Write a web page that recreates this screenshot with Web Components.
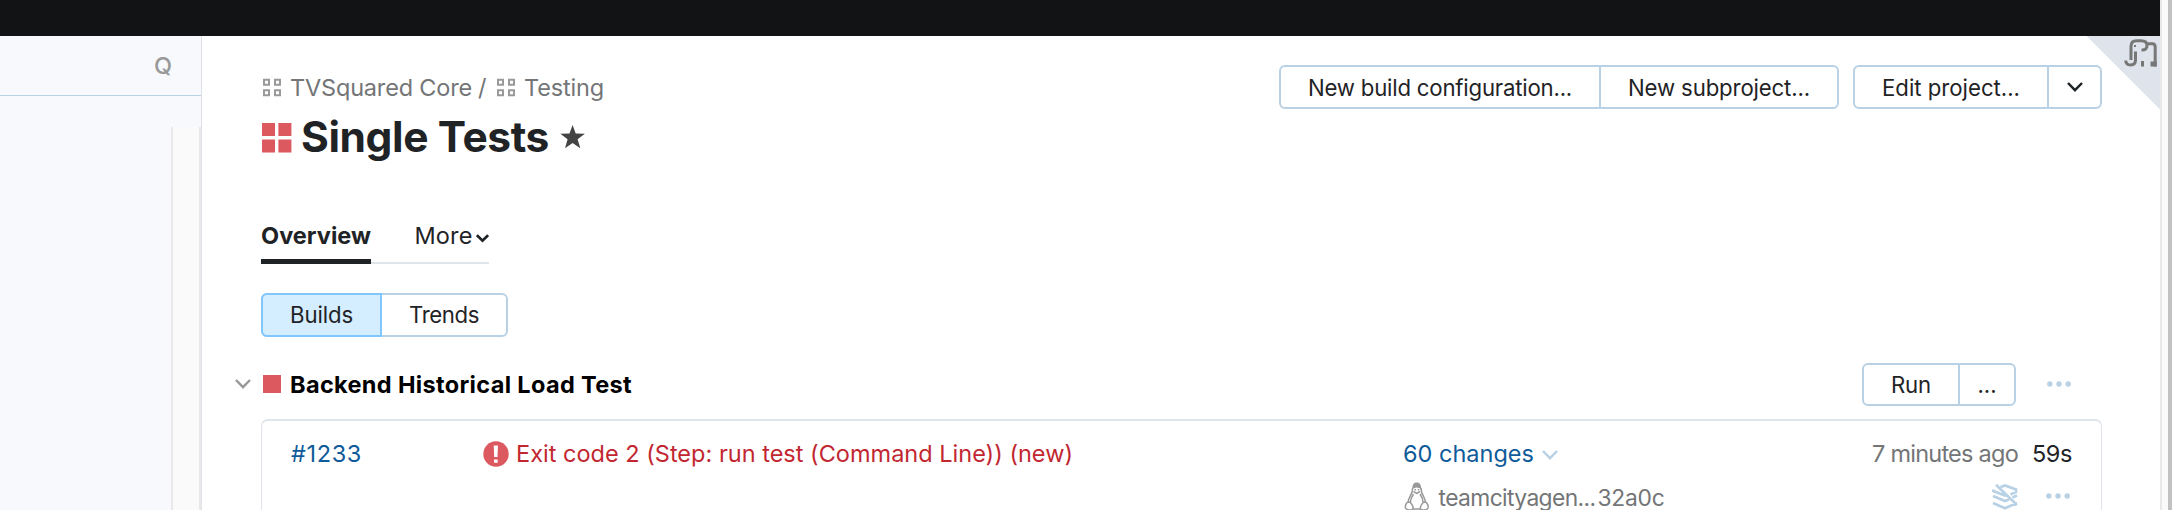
<!DOCTYPE html>
<html lang="en">
<head>
<meta charset="utf-8">
<title>Single Tests</title>
<style>
html,body{margin:0;height:510px;overflow:hidden;background:#fff}
body{font-family:Inter,"Liberation Sans",sans-serif;font-weight:400;color:#1f2326}
</style>
</head>
<body>
<tc-app></tc-app>
<script>
const define = (name, html, setup) => customElements.define(name, class extends HTMLElement {
  connectedCallback() {
    if (this.shadowRoot) return;
    const t = document.createElement('template');
    t.innerHTML = html;
    this.attachShadow({mode: 'open'}).append(t.content.cloneNode(true));
    if (setup) setup(this);
  }
});

// Single-line label; `w` is its total advance, reached through letter-spacing.
define('tc-label', `<style>:host{display:block;white-space:nowrap;line-height:30px;flex:none}span{display:inline-block}</style><span><slot></slot></span>`, el => {
  const w = +el.getAttribute('w'), s = el.shadowRoot.querySelector('span');
  if (!w) return;
  const n = el.textContent.length, natural = s.getBoundingClientRect().width;
  s.style.letterSpacing = ((w - natural) / n).toFixed(3) + 'px';
  el.style.width = w + 'px';
});

const svg = (w, h, body) => `<svg width="${w}" height="${h}" viewBox="0 0 ${w} ${h}" fill="none">${body}</svg>`;
const ICONS = {
  grid: svg(20, 19, '<g stroke="#999" stroke-width="2"><path d="M2 1.7h5v5H2zM13 1.7h5v5h-5zM2 12.2h5v5H2zM13 12.2h5v5h-5z"/></g>'),
  project: svg(30, 30, '<path fill="#dc5960" d="M0 0h13v13H0zM16.4 0h13v13h-13zM0 16.4h13v13H0zM16.4 16.4h13v13h-13z"/>'),
  star: svg(26, 24, '<path fill="#444" d="M12.6 0l3.1 8.5 9.2.3-7.3 5.5 2.7 9-7.700-5.300L5 23.300l2.600-9L.3 8.800l9.200-.3z"/>'),
  square: svg(18, 18, '<path fill="#dc5960" d="M0 0h18v18H0z"/>'),
  chevron: svg(16, 10, '<path stroke="currentColor" stroke-width="2.500" d="M1 1l7 7.200L15 1"/>'),
  small: svg(13, 9, '<path stroke="currentColor" stroke-width="2.700" d="M.9 1.200L6.500 6.700l5.600-5.500"/>'),
  dots: svg(24, 6, '<g fill="#b8d1e5"><circle cx="2.800" cy="3" r="2.700"/><circle cx="12" cy="3" r="2.700"/><circle cx="21.200" cy="3" r="2.700"/></g>'),
  alert: svg(26, 26, '<circle cx="13" cy="13" r="12.700" fill="#dc5960"/><path fill="#fff" d="M10.700 4.500h4.300l-.5 11.500h-3.300zM11 18.500h3.700v3.300H11z"/>'),
  tux: svg(26, 29, '<path fill="#999" d="M8.300 8C8 3 9.500.5 12.700.5s4.800 2.500 4.500 7.500l-1.500-1.700-3-.8-3 .8z"/><g stroke="#999" stroke-width="1.500"><path d="M8.500 6c.5 4-1 6-2.800 9-1.500 3-1.500 4-1.700 6M17.100 6c-.3 4 1 6 2.700 9 1.500 3 1.500 4 1.700 6M9.500 9.500l3.200 1.800 3.300-1.800M9.500 12c-2 3-3 6-3 8M16 12c2 3 3 6 3 8M4 20c2-.5 4 2 5 5 .5 2-.5 3-2 3-2 0-5-1-5.500-2-.5-2 .5-5 2.500-6zM21.500 20c-2-.5-4 2-5 5-.5 2 .5 3 2 3 2 0 5-1 5.500-2 .5-2-.5-5-2.500-6zM9 27h7.500"/></g><path fill="#999" d="M10.500 7h1.500v1.500h-1.500zM13.700 7h1.500v1.500h-1.500z"/>'),
  layers: svg(26, 26, '<g stroke="#b8d1e5" stroke-width="2.700"><path d="M8.500 3L13 1.500l11 4V8l-5.500 2.500M1.300 5.500V7l11.700 4.500 2-.8M1 12l12 5 4-1.600M20.500 13.500l4.500-2M1 19l12 5.200L25 19M4 .8L25 21"/></g>'),
  elephant: svg(33, 28, '<g stroke="#777" stroke-width="3"><path d="M7 21V7.500Q7 1.700 12.500 1.700H17Q23 1.700 23 6.500T17.500 11M22.500 4.800H28.500Q31.200 4.800 31.200 8V27.500M1.700 21.500Q2 26 6.500 26Q11.500 26 11.500 21V12.500"/></g><path fill="#777" d="M17 22h3v5.500h-3zM26.500 22.500h6.200v5h-6.200zM10 6h2v2h-2z"/>')
};
define('tc-icon', `<style>:host{display:block;flex:none}svg{display:block}</style><div></div>`, el => {
  el.shadowRoot.querySelector('div').innerHTML = ICONS[el.getAttribute('name')];
});

define('tc-group', `<style>:host{display:flex;box-sizing:border-box;border:2px solid #b8d1e5;border-radius:6px;height:44px;flex:none;font-size:22.200px}</style><slot></slot>`);
define('tc-button', `<style>
:host{display:flex;box-sizing:border-box;align-items:center;justify-content:center;border-right:2px solid #b8d1e5;height:40px;flex:none}
:host([last]){border-right:0}
:host([active]){background:#d4edff;border:2px solid #80c6ff;margin:-2px 0 -2px -2px;height:44px;border-radius:6px 0 0 6px}
::slotted(tc-label){padding-top:var(--label-drop,0px)}
</style><slot></slot>`, el => { el.style.width = el.getAttribute('size') + 'px'; });

define('tc-sidebar', `<style>
:host{display:flex;flex-direction:column;box-sizing:border-box;width:202px;background:#f7f9fc;border-right:1px solid #dfe3e9;color:#999;flex:none}
.search{display:flex;justify-content:flex-end;height:59px;border-bottom:1px solid #b8d1e5;padding-right:29px;font-size:23.500px}
tc-label{margin-top:14.500px;font-weight:500}
.track{box-sizing:border-box;width:30px;flex:1;margin:31px 0 0 171px;background:#fafafa;border:solid #e8e8e8;border-width:0 2px}
</style><div class="search"><tc-label>Q</tc-label></div><div class="track"></div>`);

define('tc-header', `<style>
:host{display:flex;justify-content:space-between;height:175px}
.crumbs{display:flex;padding-top:37px;padding-left:1px;font-size:23.500px;color:#737577}
.crumbs tc-icon{margin-top:4.500px}
.title{display:flex;margin-top:3px;padding-left:1px;font-size:42.500px;font-weight:700}
.title tc-label{line-height:62px}
.actions{display:flex;gap:14px;padding-top:29px;--label-drop:2px}
</style>
<div>
 <div class="crumbs"><tc-icon name="grid"></tc-icon><tc-label w="182" style="margin-left:8px">TVSquared Core</tc-label><tc-label style="margin-left:6px;width:18px">/</tc-label><tc-icon name="grid"></tc-icon><tc-label w="80" style="margin-left:8px">Testing</tc-label></div>
 <div class="title"><tc-icon name="project" style="margin-top:17px"></tc-icon><tc-label w="248" style="margin-left:9px">Single Tests</tc-label><tc-icon name="star" style="margin:19px 0 0 11px"></tc-icon></div>
</div>
<div class="actions">
 <tc-group><tc-button size="320"><tc-label w="264">New build configuration...</tc-label></tc-button><tc-button last size="236"><tc-label w="182">New subproject...</tc-label></tc-button></tc-group>
 <tc-group><tc-button size="194"><tc-label w="138">Edit project...</tc-label></tc-button><tc-button last size="51"><tc-icon name="chevron"></tc-icon></tc-button></tc-group>
</div>`);

define('tc-tabs', `<style>
:host{display:flex;font-size:23.500px;height:53px}
div{box-sizing:border-box;height:53px;padding-top:10px}
.on{width:110px;border-bottom:5px solid #1f2326;font-weight:700}
.more{display:flex;width:118px;border-bottom:2px solid #dfe5eb;padding-left:43.500px}
tc-icon{margin:13px 0 0 3px}
</style><div class="on"><tc-label w="110">Overview</tc-label></div><div class="more"><tc-label w="58">More</tc-label><tc-icon name="small"></tc-icon></div>`);

define('tc-build-head', `<style>
:host{display:flex;height:56px;margin-top:26px;margin-left:-26px;font-size:23.500px;font-weight:700;color:#000}
.end{display:flex;margin-left:auto;margin-right:31px;font-weight:400;color:#1f2326}
</style>
<tc-icon name="chevron" style="color:#999;margin-top:16px"></tc-icon><tc-icon name="square" style="margin:12px 0 0 12px"></tc-icon><tc-label w="342" style="margin:7px 0 0 9px">Backend Historical Load Test</tc-label>
<div class="end"><tc-group style="height:43px"><tc-button size="96" style="height:39px"><tc-label w="40">Run</tc-label></tc-button><tc-button last size="54" style="height:39px"><tc-label w="19">...</tc-label></tc-button></tc-group><tc-icon name="dots" style="margin:17.500px 0 0 31px"></tc-icon></div>`);

define('tc-build-row', `<style>
:host{display:grid;grid-template-columns:193px 920px 1fr auto;box-sizing:border-box;height:120px;border:1px solid #dfe3ec;border-top-width:2px;border-radius:7px 7px 0 0;padding:18px 30px 0 29px;font-size:23.500px;color:#737577}
.l{display:flex}
.agent{display:flex;margin-top:14px}
.end{display:flex;flex-direction:column;align-items:flex-end}
</style>
<tc-label w="71" style="color:#0f5b99">#1233</tc-label>
<div class="l" style="color:#c22731"><tc-icon name="alert" style="margin:2px 0 0 -1px"></tc-icon><tc-label w="557" style="margin-left:7px">Exit code 2 (Step: run test (Command Line)) (new)</tc-label></div>
<div><div class="l" style="color:#0f5b99;margin-left:-1px"><tc-label w="131">60 changes</tc-label><tc-icon name="chevron" style="color:#b8d1e5;margin:11px 0 0 8px"></tc-icon></div>
<div class="agent"><tc-icon name="tux" style="margin-top:-1.500px"></tc-icon><tc-label w="157" style="margin-left:8.500px;font-size:22.800px">teamcityagen...</tc-label><tc-label w="67" style="margin-left:2px;font-size:22.800px">32a0c</tc-label></div></div>
<div class="end"><div class="l"><tc-label w="146">7 minutes ago</tc-label><tc-label w="40" style="margin:0 -1px 0 14px;color:#1f2326">59s</tc-label></div>
<div class="l" style="margin-top:15px"><tc-icon name="layers"></tc-icon><tc-icon name="dots" style="margin:9px 1px 0 28px"></tc-icon></div></div>`);

define('tc-app', `<style>
:host{display:flex;height:510px;width:2172px;overflow:hidden}
.page{width:2160px;display:flex;flex-direction:column;flex:none}
.bar{height:36px;background:#121315;flex:none}
.body{display:flex;flex:1;min-height:0}
main{position:relative;flex:1;padding:0 58px 0 59px;min-width:0;height:474px}
.corner{position:absolute;right:0;top:0;width:73px;height:73px;background:linear-gradient(to top right,transparent 50%,#dfe3eb 50%)}
.corner tc-icon{margin:3px 0 0 37px}
.scroll{box-sizing:border-box;width:12px;background:#fafafa;border-left:2px solid #e8e8e8;border-right:4px solid #c1c1c1}
</style>
<div class="page"><div class="bar"></div><div class="body"><tc-sidebar></tc-sidebar>
<main><div class="corner"><tc-icon name="elephant"></tc-icon></div>
<tc-header></tc-header><tc-tabs></tc-tabs>
<tc-group style="width:247px;margin-top:29px"><tc-button active size="121"><tc-label w="63">Builds</tc-label></tc-button><tc-button last size="124"><tc-label w="70">Trends</tc-label></tc-button></tc-group>
<tc-build-head></tc-build-head><tc-build-row></tc-build-row></main></div></div>
<div class="scroll"></div>`);
</script>
</body>
</html>
